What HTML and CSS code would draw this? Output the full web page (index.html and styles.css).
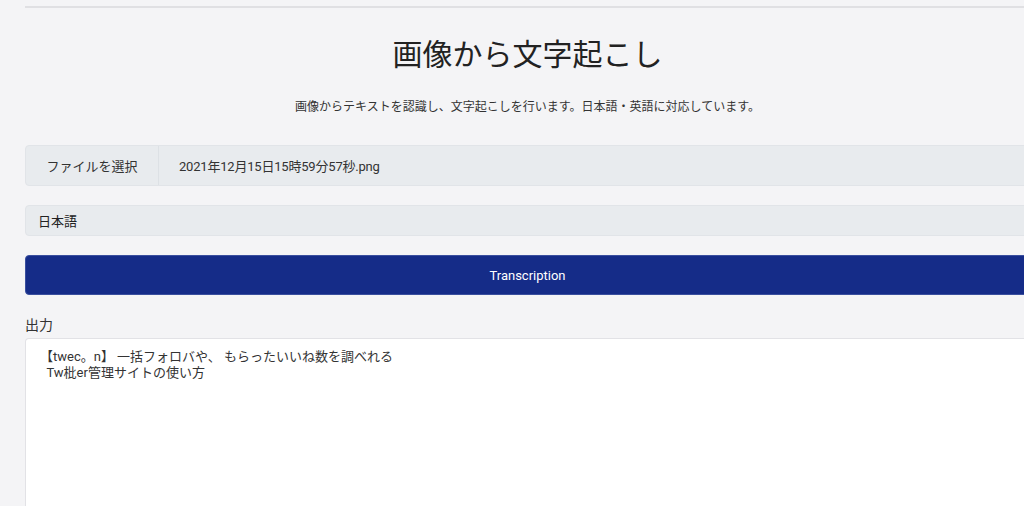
FILE: index.html
```html
<!DOCTYPE html>
<html lang="ja">
<head>
    <meta charset="UTF-8">
    <meta name="viewport" content="width=device-width, initial-scale=1.0">
    <title>画像から文字起こし</title>
    <link rel="stylesheet" href="styles.css">
</head>
<body>
    <div class="container">
        <div class="top-rule"></div>
        <h1>画像から文字起こし</h1>
        <p class="lead">画像からテキストを認識し、文字起こしを行います。日本語・英語に対応しています。</p>

        <div class="file-row">
            <span class="file-button">ファイルを選択</span>
            <span class="file-name">2021年12月15日15時59分57秒.png</span>
        </div>

        <div class="lang-select">日本語</div>

        <button class="run-button" type="button">Transcription</button>

        <label class="output-label" for="output">出力</label>
        <textarea id="output" class="output">【twec。n】 一括フォロバや、 もらったいいね数を調べれる
  Tw枇er管理サイトの使い方</textarea>
    </div>
</body>
</html>
```

FILE: styles.css
```css
* {
    box-sizing: border-box;
    margin: 0;
    padding: 0;
}

html, body {
    height: 100%;
    overflow: hidden;
}

body {
    background-color: #f4f4f6;
    color: #333;
    font-family: Roboto, "Noto Sans CJK JP", sans-serif;
}

.container {
    width: 1005px;
    margin-left: 25px;
}

.top-rule {
    height: 2px;
    margin-top: 6px;
    background-color: #e0e0e3;
}

h1 {
    margin-top: 29px;
    font-size: 30px;
    font-weight: 400;
    line-height: 36px;
    text-align: center;
    color: #222;
}

.lead {
    margin-top: 25px;
    font-size: 12px;
    line-height: 18px;
    text-align: center;
    color: #333;
}

.file-row {
    display: flex;
    height: 41px;
    margin-top: 29px;
    background-color: #e8ebee;
    border: 1px solid #e1e4e8;
    border-radius: 4px;
    font-size: 13px;
}

.file-button {
    display: flex;
    align-items: center;
    justify-content: center;
    width: 133px;
    border-right: 1px solid #dde1e5;
    color: #333;
}

.file-name {
    display: flex;
    align-items: center;
    padding-left: 20px;
    letter-spacing: -0.2px;
    color: #333;
}

.lang-select {
    display: flex;
    align-items: center;
    height: 31px;
    margin-top: 19px;
    padding-left: 12px;
    background-color: #e8ebee;
    border: 1px solid #e1e4e8;
    border-radius: 4px;
    font-size: 13px;
    color: #222;
}

.run-button {
    display: block;
    width: 100%;
    height: 40px;
    margin-top: 19px;
    background-color: #152c88;
    border: 1px solid #3a4f9e;
    border-radius: 4px;
    color: #fff;
    font-family: Roboto, sans-serif;
    font-size: 13px;
    cursor: pointer;
}

.output-label {
    display: block;
    margin-top: 20px;
    font-size: 14px;
    line-height: 20px;
    color: #333;
}

.output {
    display: block;
    width: 100%;
    height: 168px;
    margin-top: 3px;
    padding: 10px 14px;
    background-color: #fff;
    border: 1px solid #e2e2e6;
    border-bottom: none;
    border-radius: 4px 0 0 0;
    font-family: Roboto, "Noto Sans CJK JP", sans-serif;
    font-size: 13px;
    line-height: 16px;
    color: #333;
    resize: none;
    outline: none;
}
```
